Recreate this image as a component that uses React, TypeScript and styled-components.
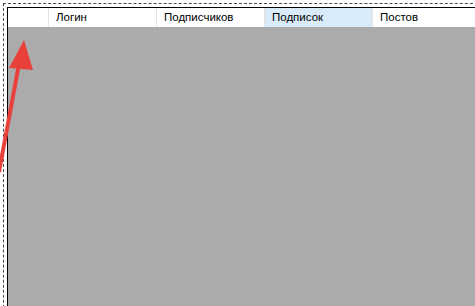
import React from "react";
import styled, { createGlobalStyle } from "styled-components";

const Global = createGlobalStyle`
  html, body {
    margin: 0;
    padding: 0;
    background: #fff;
    overflow: hidden;
  }
  body {
    font-family: "Liberation Sans", Arial, sans-serif;
  }
`;

const Page = styled.div`
  position: relative;
  width: 475px;
  height: 306px;
  overflow: hidden;
  background: #fff;
`;

const Focus = styled.div`
  position: absolute;
  left: 3px;
  top: 3px;
  width: 500px;
  height: 320px;
  border: 1px dashed #4a4a4a;
  padding: 3px;
  box-sizing: border-box;
`;

const Grid = styled.div`
  height: 100%;
  border: 1px solid #000;
  background: #ababab;
  display: flex;
  flex-direction: column;
`;

const HeaderRow = styled.div`
  display: flex;
  height: 19px;
  background: #fff;
`;

const HeaderCell = styled.div<{ $width: number; $hot?: boolean }>`
  flex: 0 0 ${({ $width }) => $width}px;
  box-sizing: border-box;
  border-right: 1px solid #e3e3e3;
  background: ${({ $hot }) => ($hot ? "#d9ebf9" : "#fff")};
  padding-left: 7px;
  font-size: 11.5px;
  line-height: 19px;
  color: #000;
  white-space: nowrap;
`;

const Arrow = styled.svg`
  position: absolute;
  left: 0;
  top: 0;
  pointer-events: none;
`;

const columns = [
  { title: "", width: 41 },
  { title: "Логин", width: 108 },
  { title: "Подписчиков", width: 108 },
  { title: "Подписок", width: 108, hot: true },
  { title: "Постов", width: 108 },
];

export default function App() {
  return (
    <Page>
      <Global />
      <Focus>
        <Grid>
          <HeaderRow>
            {columns.map((c, i) => (
              <HeaderCell key={i} $width={c.width} $hot={c.hot}>
                {c.title}
              </HeaderCell>
            ))}
          </HeaderRow>
        </Grid>
      </Focus>
      <Arrow width="60" height="200" viewBox="0 0 60 200">
        <line x1="-1" y1="172" x2="19" y2="64" stroke="#e8413b" strokeWidth="4" />
        <polygon points="24,40 9,68 33,70" fill="#e8413b" />
      </Arrow>
    </Page>
  );
}
